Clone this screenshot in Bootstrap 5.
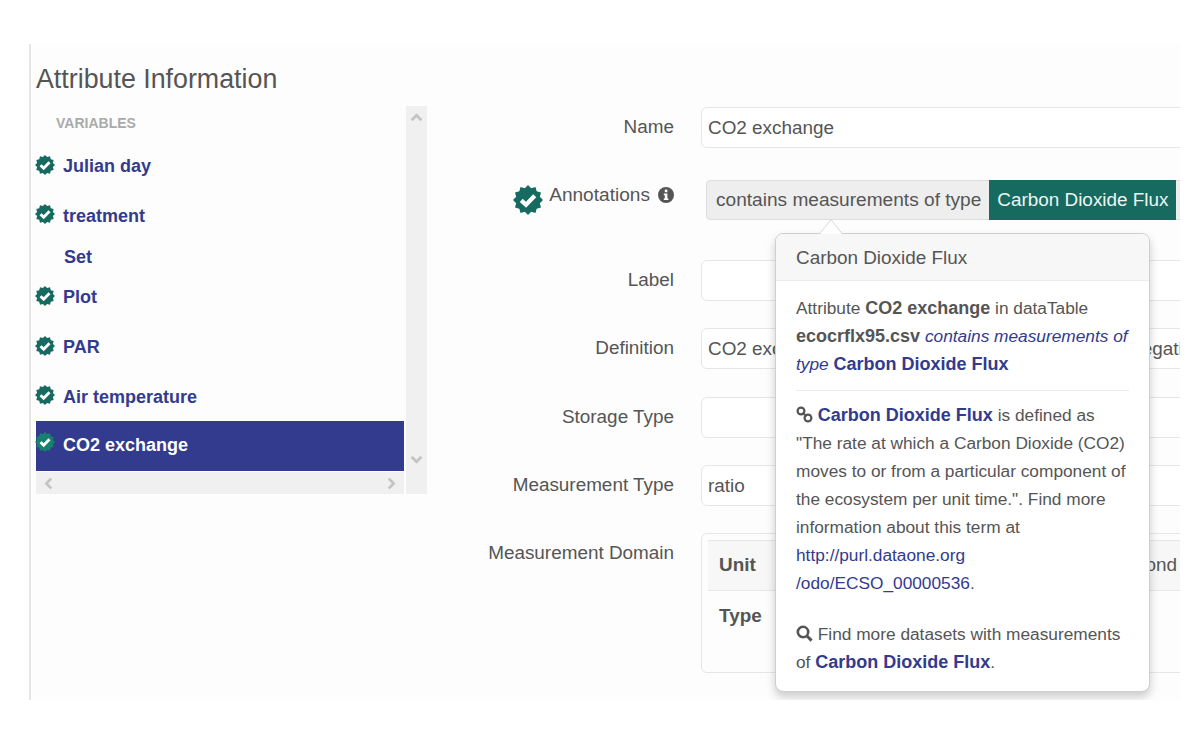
<!DOCTYPE html>
<html lang="en">

<head>
    <meta charset="UTF-8">
    <meta name="viewport" content="width=device-width, initial-scale=1.0">
    <title>Attribute Information</title>
    <link href="https://cdn.jsdelivr.net/npm/bootstrap@5.3.2/dist/css/bootstrap.min.css" rel="stylesheet">
    <style>
        :root {
            --bs-font-sans-serif: "Liberation Sans", Arial, sans-serif;
            --brand: #323b8e;
            --teal: #166a5f;
            --ink: #555;
        }

        body {
            background: #fff;
            color: var(--ink);
            font-family: "Liberation Sans", Arial, sans-serif;
            font-size: 17px;
        }

        .stage {
            width: 1151px;
            height: 656px;
            margin: 44px 0 0 29px;
            padding-left: 5px;
            background: #fdfdfd;
            border-left: 2px solid #e6e6e6;
            overflow: hidden;
        }

        .stage-title {
            height: 62px;
            margin: 0;
            padding-top: 18px;
            font-size: 26.8px;
            line-height: 34px;
            color: var(--ink);
        }

        .stage-body {
            width: 1500px;
        }

        /* left list */
        .var-panel {
            width: 391px;
            height: 388px;
            flex: none;
        }

        .var-main {
            width: 368px;
        }

        .var-list {
            height: 366px;
        }

        .var-head {
            height: 36px;
            padding: 8px 0 0 20px;
            font-size: 14px;
            line-height: 18px;
            font-weight: 700;
            color: #aaa;
        }

        .var-item {
            height: 49.6px;
            gap: 7px;
            padding: 0;
            border: 0;
            background: transparent;
            font-size: 18px;
            font-weight: 700;
            color: var(--brand);
        }

        .var-item.var-sub {
            height: 32px;
            padding-left: 28px;
        }

        .var-item.active {
            margin-top: 3px;
            background: var(--brand);
            color: #fff;
        }

        .var-check {
            width: 20px;
            height: 20px;
            flex: none;
            margin: -4px 0 0 -1px;
            margin-right: 1px;
            color: var(--teal);
        }

        .var-item.active .var-check {
            margin-top: -7px;
            color: #17806f;
        }

        .scroll-h {
            height: 22px;
            margin-top: 0;
            padding: 0 6px;
            background: #f0f0f0;
        }

        .scroll-v {
            width: 21px;
            margin-left: 2px;
            padding: 5px 4px 5px;
            background: #f0f0f0;
        }

        .scroll-v svg:last-child {
            margin-bottom: 23px;
        }

        .scroll-btn {
            width: 13px;
            height: 13px;
            color: #c4c4c4;
        }

        /* right form */
        .attr-form {
            margin-top: 1px;
            font-size: 18.9px;
        }

        .attr-row {
            margin-bottom: 27px;
        }

        .attr-row-wide {
            margin-bottom: 28px;
        }

        .attr-label {
            width: 247px;
            margin-right: 27px;
            flex: none;
            text-align: right;
            color: var(--ink);
        }

        .attr-input {
            width: 600px;
            height: 41px;
            padding: 0 6px;
            font-size: 18.9px;
            color: var(--ink);
            background: #fff;
            border-color: #e6e6e6;
            border-radius: 6px;
        }

        .annot-row {
            margin: 32px 0 40px;
            height: 40px;
            font-size: 19.1px;
        }

        .annot-label {
            gap: 6px;
            padding-bottom: 10px;
        }

        .annot-badge {
            width: 30px;
            height: 30px;
            margin-top: 9px;
            color: var(--teal);
        }

        .annot-info {
            width: 16px;
            height: 16px;
            margin-left: 2px;
            color: var(--ink);
        }

        .annot-pill {
            margin-left: 5px;
            width: 600px;
            height: 40px;
            background: #eee;
            border: 1px solid #ddd;
            border-radius: 4px 0 0 4px;
        }

        .annot-prop {
            padding: 0 8px 0 9px;
        }

        .annot-value {
            padding: 0 8px;
            margin: -1px 1px -1px 0;
            font-size: 18.9px;
            background: var(--teal);
            color: #eef5f3;
        }

        .annot-pop {
            --bs-popover-max-width: 375px;
            --bs-popover-border-color: #cfcfcf;
            --bs-popover-border-radius: 8px;
            --bs-popover-inner-border-radius: 7px;
            --bs-popover-header-bg: #f7f7f7;
            --bs-popover-header-color: var(--ink);
            --bs-popover-arrow-width: 22px;
            --bs-popover-arrow-height: 14px;
            --bs-popover-box-shadow: 0 5px 10px rgba(0, 0, 0, .2);
            position: absolute;
            width: 375px;
            top: 53px;
            left: 74px;
            font-size: 17.3px;
            box-shadow: var(--bs-popover-box-shadow);
        }

        .annot-pop b {
            font-size: 18px;
        }

        .annot-pop .popover-arrow {
            position: absolute;
            left: 44px;
        }

        .annot-pop .popover-header {
            height: 47px;
            padding: 0 20px;
            font-size: 18.9px;
            font-weight: 400;
            line-height: 48px;
            border-bottom-color: #ebebeb;
        }

        .annot-pop .popover-body {
            padding: 13px 20px 15px;
            line-height: 28px;
            color: var(--ink);
        }

        .annot-pop p {
            margin: 0;
        }

        .annot-pop hr {
            margin: 12px 0 10px;
            border-color: #aaa;
        }

        .annot-pop a {
            color: var(--brand);
            text-decoration: none;
        }

        .annot-pop p+p {
            margin-top: 23px;
        }

        .pop-glyph {
            width: 17px;
            height: 17px;
            margin-top: -3px;
            vertical-align: middle;
            color: var(--ink);
        }

        .domain-label {
            padding-top: 6px;
        }

        .domain-box {
            width: 600px;
            height: 140px;
            padding: 6px;
            font-size: 18.9px;
            background: transparent;
            border: 1px solid #e6e6e6;
            border-radius: 6px;
        }

        .domain-table {
            width: 477px;
            margin: 0;
            --bs-table-bg: transparent;
        }

        .domain-table th,
        .domain-table td {
            height: 50px;
            padding: 0 8px 0 11px;
            vertical-align: middle;
            color: var(--ink);
            border-color: #e6e6e6;
        }

        .domain-table tr:first-child th,
        .domain-table tr:first-child td {
            background: #f7f7f7;
            border-top: 1px solid #e6e6e6;
        }

        .domain-table tr:last-child th,
        .domain-table tr:last-child td {
            border-bottom: 0;
        }
    </style>
</head>

<body>
    <svg width="0" height="0" class="d-block position-absolute">
        <symbol id="burst" viewBox="0 0 24 24">
            <polygon fill="currentColor" points="24,12 21.47,14.54 22.39,18 18.93,18.93 18,22.39 14.54,21.47 12,24 9.46,21.47 6,22.39 5.07,18.93 1.61,18 2.53,14.54 0,12 2.53,9.46 1.61,6 5.07,5.07 6,1.61 9.46,2.53 12,0 14.54,2.53 18,1.61 18.93,5.07 22.39,6 21.47,9.46" />
            <polyline points="6.6,12.3 10.4,15.8 17.4,8.6" fill="none" stroke="#fff" stroke-width="3.4" />
        </symbol>
        <symbol id="chev" viewBox="0 0 12 12">
            <polyline points="1.5,8.5 6,4 10.5,8.5" fill="none" stroke="currentColor" stroke-width="2.6" />
        </symbol>
    </svg>

    <div class="stage">
        <h1 class="stage-title">Attribute Information</h1>
        <div class="stage-body d-flex">
            <div class="var-panel d-flex">
                <div class="var-main">
                    <div class="var-list list-group rounded-0">
                        <div class="var-head text-uppercase">Variables</div>
                        <a class="var-item list-group-item d-flex align-items-center rounded-0"><svg class="var-check"><use href="#burst" /></svg>Julian day</a>
                        <a class="var-item list-group-item d-flex align-items-center rounded-0"><svg class="var-check"><use href="#burst" /></svg>treatment</a>
                        <a class="var-item var-sub list-group-item d-flex align-items-center rounded-0">Set</a>
                        <a class="var-item list-group-item d-flex align-items-center rounded-0"><svg class="var-check"><use href="#burst" /></svg>Plot</a>
                        <a class="var-item list-group-item d-flex align-items-center rounded-0"><svg class="var-check"><use href="#burst" /></svg>PAR</a>
                        <a class="var-item list-group-item d-flex align-items-center rounded-0"><svg class="var-check"><use href="#burst" /></svg>Air temperature</a>
                        <a class="var-item list-group-item active d-flex align-items-center rounded-0"><svg class="var-check"><use href="#burst" /></svg>CO2 exchange</a>
                    </div>
                    <div class="scroll-h d-flex align-items-center justify-content-between">
                        <svg class="scroll-btn"><use href="#chev" transform="rotate(-90 6.5 6.5)" /></svg>
                        <svg class="scroll-btn"><use href="#chev" transform="rotate(90 6.5 6.5)" /></svg>
                    </div>
                </div>
                <div class="scroll-v d-flex flex-column justify-content-between">
                    <svg class="scroll-btn"><use href="#chev" /></svg>
                    <svg class="scroll-btn"><use href="#chev" transform="rotate(180 6.5 6.5)" /></svg>
                </div>
            </div>

            <div class="attr-form">
                <div class="attr-row d-flex align-items-center">
                    <label class="attr-label">Name</label>
                    <input class="attr-input form-control" value="CO2 exchange" readonly>
                </div>

                <div class="annot-row d-flex align-items-center">
                    <div class="attr-label annot-label d-flex align-items-center justify-content-end">
                        <svg class="annot-badge flex-none"><use href="#burst" /></svg>
                        <span>Annotations</span>
                        <svg class="annot-info" viewBox="0 0 16 16">
                            <circle cx="8" cy="8" r="8" fill="currentColor" />
                            <rect x="6.8" y="2.6" width="2.6" height="2.6" fill="#fff" />
                            <polygon points="5.8,6.6 9.4,6.6 9.4,11.4 10.4,11.4 10.4,13 5.8,13 5.8,11.4 6.8,11.4 6.8,8.2 5.8,8.2" fill="#fff" />
                        </svg>
                    </div>
                    <div class="position-relative">
                        <div class="annot-pill d-flex align-items-stretch">
                            <span class="annot-prop d-flex align-items-center">contains measurements of type</span>
                            <span class="annot-value d-flex align-items-center">Carbon Dioxide Flux</span>
                        </div>
                        <div class="annot-pop popover bs-popover-bottom" role="tooltip">
                            <div class="popover-arrow"></div>
                            <h3 class="popover-header">Carbon Dioxide Flux</h3>
                            <div class="popover-body">
                                <p>Attribute <b>CO2 exchange</b> in dataTable <b>ecocrflx95.csv</b> <a href="#"><i>contains measurements of type</i> <b>Carbon Dioxide Flux</b></a></p>
                                <hr>
                                <p>
                                    <svg class="pop-glyph" viewBox="0 0 17 17">
                                        <g fill="none" stroke="currentColor" stroke-width="2.2">
                                            <circle cx="5" cy="5" r="3.4" />
                                            <circle cx="12" cy="12" r="3.4" />
                                            <line x1="6.5" y1="6.5" x2="10.5" y2="10.5" />
                                        </g>
                                    </svg>
                                    <a href="#"><b>Carbon Dioxide Flux</b></a> is defined as "The rate at which a Carbon Dioxide (CO2) moves to or from a particular component of the ecosystem per unit time.". Find more information about this term at<br><a href="#">http://purl.dataone.org<br>/odo/ECSO_00000536</a>.
                                </p>
                                <p>
                                    <svg class="pop-glyph" viewBox="0 0 17 17">
                                        <circle cx="7" cy="7" r="5.2" fill="none" stroke="currentColor" stroke-width="2.6" />
                                        <line x1="11" y1="11" x2="15.6" y2="15.6" stroke="currentColor" stroke-width="3" />
                                    </svg>
                                    Find more datasets with measurements of <a href="#"><b>Carbon Dioxide Flux</b></a>.
                                </p>
                            </div>
                        </div>
                    </div>
                </div>

                <div class="attr-row d-flex align-items-center">
                    <label class="attr-label">Label</label>
                    <input class="attr-input form-control" readonly>
                </div>
                <div class="attr-row-wide d-flex align-items-center">
                    <label class="attr-label">Definition</label>
                    <input class="attr-input form-control" value="CO2 exchange between plot and the air, uptake is negative" readonly>
                </div>
                <div class="attr-row d-flex align-items-center">
                    <label class="attr-label">Storage Type</label>
                    <input class="attr-input form-control" readonly>
                </div>
                <div class="attr-row d-flex align-items-center">
                    <label class="attr-label">Measurement Type</label>
                    <input class="attr-input form-control" value="ratio" readonly>
                </div>
                <div class="d-flex align-items-start">
                    <label class="attr-label domain-label">Measurement Domain</label>
                    <div class="domain-box form-control">
                        <table class="domain-table table">
                            <tr>
                                <th>Unit</th>
                                <td class="text-end">micromole per meter squared per second</td>
                            </tr>
                            <tr>
                                <th>Type</th>
                                <td></td>
                            </tr>
                        </table>
                    </div>
                </div>
            </div>
        </div>
    </div>

    <script src="https://cdn.jsdelivr.net/npm/bootstrap@5.3.2/dist/js/bootstrap.bundle.min.js"></script>
</body>

</html>
